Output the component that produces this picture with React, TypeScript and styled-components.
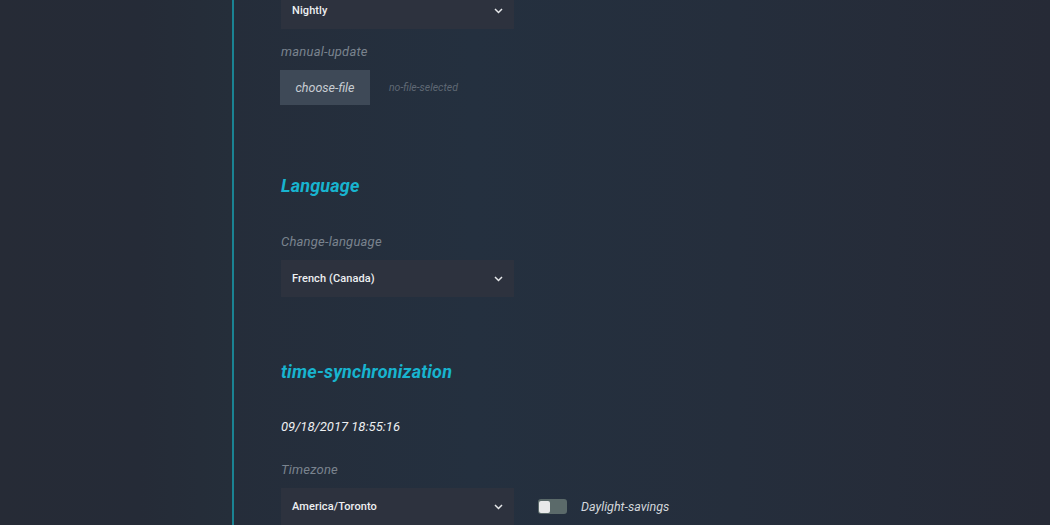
import React from "react";
import styled, { createGlobalStyle } from "styled-components";

const Global = createGlobalStyle`
  html, body { margin: 0; padding: 0; height: 100%; overflow: hidden; }
  body {
    font-family: Roboto, "Liberation Sans", sans-serif;
    background: #242d3a;
  }
`;

const Page = styled.div`
  display: flex;
  width: 1050px;
  height: 525px;
  overflow: hidden;
  background: linear-gradient(90deg, #262b36 0%, #252d3a 22%, #24303f 45%, #252e3c 70%, #262a36 100%);
`;

const Sidebar = styled.aside`
  width: 232px;
  flex-shrink: 0;
  border-right: 2px solid #1a8393;
  background: linear-gradient(90deg, #262b36 0%, #252b37 60%, #252e3a 100%);
`;

const Content = styled.main`
  flex: 1;
  display: flex;
  flex-direction: column;
  align-items: flex-start;
  padding-left: 46px;
  margin-top: -8px;
`;

const SelectBox = styled.div<{ $mt?: number }>`
  width: 233px;
  height: 37px;
  margin-top: ${(p) => p.$mt ?? 0}px;
  margin-left: 1px;
  box-sizing: border-box;
  background: #2d323e;
  display: flex;
  align-items: center;
  justify-content: space-between;
  padding: 0 11px;
  color: #eef0f2;
  font-size: 11px;
  font-weight: 500;
  letter-spacing: 0.1px;
`;

const Label = styled.div<{ $mt: number }>`
  margin-top: ${(p) => p.$mt}px;
  margin-left: 1px;
  font-size: 13px;
  line-height: 16px;
  font-style: italic;
  color: #7a838e;
  letter-spacing: 0.2px;
`;

const Heading = styled.h2<{ $mt: number }>`
  margin: ${(p) => p.$mt}px 0 0 1px;
  font-size: 18px;
  line-height: 22px;
  font-weight: 700;
  font-style: italic;
  color: #18b4cf;
  letter-spacing: 0.2px;
`;

const FileRow = styled.div`
  display: flex;
  align-items: center;
  gap: 19px;
  margin-top: 10px;
`;

const FileButton = styled.button`
  width: 90px;
  height: 35px;
  border: none;
  background: #3e4957;
  color: #c8cdd3;
  font-family: Roboto, "Liberation Sans", sans-serif;
  font-size: 12.5px;
  font-style: italic;
  padding: 0;
`;

const FileHint = styled.span`
  font-size: 10.5px;
  font-style: italic;
  color: #5f6874;
`;

const DateText = styled.div`
  margin-top: 36px;
  margin-left: 1px;
  font-size: 13px;
  line-height: 16px;
  font-style: italic;
  font-weight: 400;
  color: #eef0f2;
`;

const TimezoneRow = styled.div`
  display: flex;
  align-items: center;
  margin-top: 10px;
`;

const Toggle = styled.div`
  margin-left: 24px;
  width: 29px;
  height: 15px;
  border-radius: 3px;
  background: #5b6a6a;
  display: flex;
  align-items: center;
  padding: 0 1px;
  box-sizing: border-box;
`;

const Knob = styled.span`
  width: 11px;
  height: 12px;
  border-radius: 2px;
  background: #e8e9ea;
`;

const ToggleLabel = styled.span`
  margin-left: 14px;
  font-size: 12.5px;
  font-style: italic;
  color: #d3d7dc;
`;

const Chevron = () => (
  <svg width="9" height="6" viewBox="0 0 9 6" fill="none">
    <path d="M1 1l3.5 3.5L8 1" stroke="#e6e8ea" strokeWidth="1.5" />
  </svg>
);

export default function App() {
  return (
    <>
      <Global />
      <Page>
        <Sidebar />
        <Content>
          <SelectBox>
            <span>Nightly</span>
            <Chevron />
          </SelectBox>
          <Label $mt={15}>manual-update</Label>
          <FileRow>
            <FileButton>choose-file</FileButton>
            <FileHint>no-file-selected</FileHint>
          </FileRow>
          <Heading $mt={70}>Language</Heading>
          <Label $mt={37}>Change-language</Label>
          <SelectBox $mt={10}>
            <span>French (Canada)</span>
            <Chevron />
          </SelectBox>
          <Heading $mt={64}>time-synchronization</Heading>
          <DateText>09/18/2017 18:55:16</DateText>
          <Label $mt={27}>Timezone</Label>
          <TimezoneRow>
            <SelectBox>
              <span>America/Toronto</span>
              <Chevron />
            </SelectBox>
            <Toggle>
              <Knob />
            </Toggle>
            <ToggleLabel>Daylight-savings</ToggleLabel>
          </TimezoneRow>
        </Content>
      </Page>
    </>
  );
}
